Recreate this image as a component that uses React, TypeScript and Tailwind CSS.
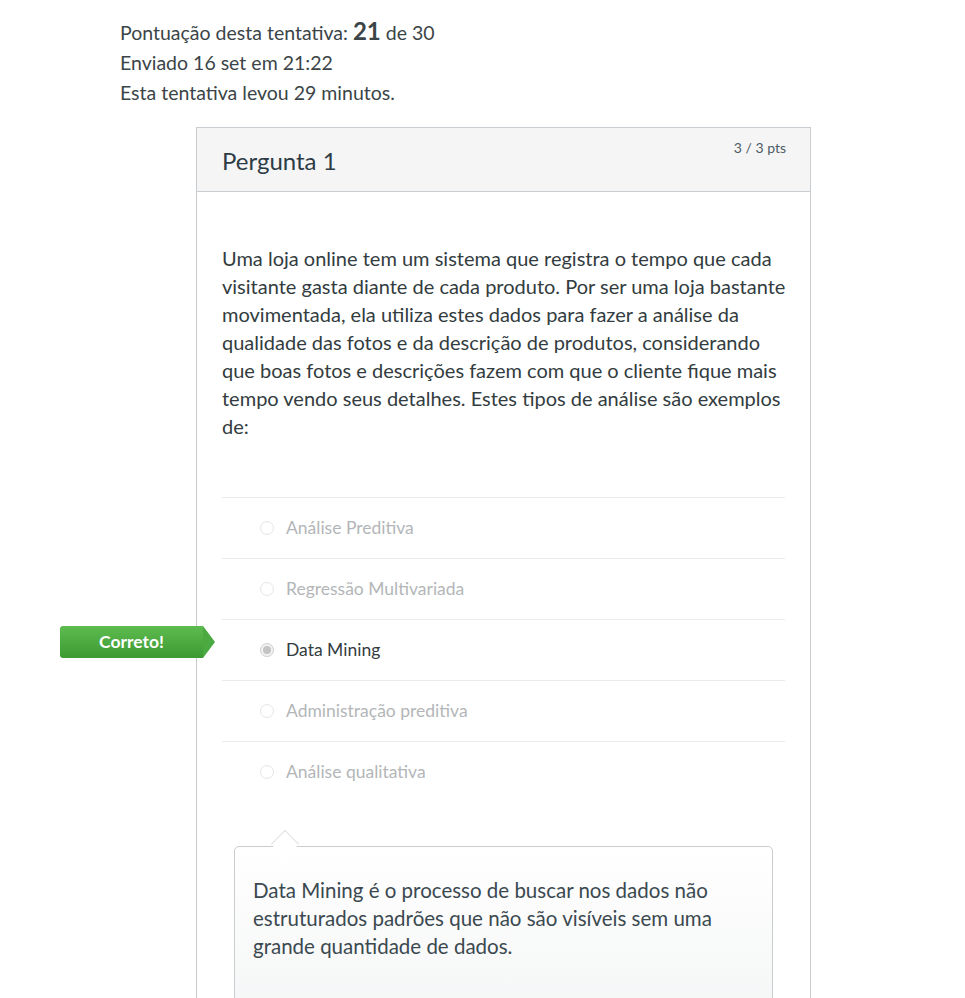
import React from 'react';

const answers = [
  { text: 'Análise Preditiva', selected: false },
  { text: 'Regressão Multivariada', selected: false },
  { text: 'Data Mining', selected: true },
  { text: 'Administração preditiva', selected: false },
  { text: 'Análise qualitativa', selected: false },
];

const Radio = ({ selected }: { selected: boolean }) => (
  <span
    className={
      'inline-flex items-center justify-center w-[14px] h-[14px] rounded-full border ' +
      (selected ? 'border-[#cfcfcf] bg-[#f2f2f2]' : 'border-[#e6e6e6] bg-white')
    }
  >
    {selected && <span className="w-[8px] h-[8px] rounded-full bg-[#c4c4c4]" />}
  </span>
);

const App = () => {
  return (
    <div
      className="min-h-screen bg-white text-[#2d3b45] overflow-hidden"
      style={{ fontFamily: 'Lato, "Open Sans", "Liberation Sans", sans-serif' }}
    >
      <div className="pl-[120px] pt-[16px] text-[19.5px] leading-[30px] text-[#3b4548]">
        <div>
          Pontuação desta tentativa: <span className="text-[24px] font-bold">21</span> de 30
        </div>
        <div>Enviado 16 set em 21:22</div>
        <div>Esta tentativa levou 29 minutos.</div>
      </div>

      <div className="ml-[196px] mt-[19px] w-[615px] border border-[#c7cdd1] border-b-0">
        <div className="h-[64px] bg-[#f5f5f5] border-b border-[#c7cdd1] flex justify-between pl-[25px] pr-[24px]">
          <h2 className="text-[24px] pt-[18px] leading-[30px] text-[#2d3b45]">Pergunta 1</h2>
          <span className="text-[14px] pt-[10px] leading-[20px] text-[#4d5b65]">3 / 3 pts</span>
        </div>

        <div className="pl-[25px] pr-[25px] pt-[52px]">
          <p className="text-[20px] leading-[28px] whitespace-nowrap text-[#333c40]">
            Uma loja online tem um sistema que registra o tempo que cada
            <br />
            visitante gasta diante de cada produto. Por ser uma loja bastante
            <br />
            movimentada, ela utiliza estes dados para fazer a análise da
            <br />
            qualidade das fotos e da descrição de produtos, considerando
            <br />
            que boas fotos e descrições fazem com que o cliente fique mais
            <br />
            tempo vendo seus detalhes. Estes tipos de análise são exemplos
            <br />
            de:
          </p>

          <div className="mt-[57px]">
            {answers.map((a) => (
              <div
                key={a.text}
                className="relative h-[61px] border-t border-[#ebebeb] flex items-center pl-[38px] gap-[12px]"
              >
                {a.selected && (
                  <div className="absolute left-[-162px] top-[6px] flex items-center">
                    <div className="w-[143px] h-[32px] rounded-l-[3px] bg-gradient-to-b from-[#5dbb4f] to-[#3c9a33] text-white text-[17.5px] font-bold flex items-center justify-center">
                      Correto!
                    </div>
                    <div className="w-0 h-0 border-y-[16px] border-y-transparent border-l-[12px] border-l-[#4aa940]" />
                  </div>
                )}
                <Radio selected={a.selected} />
                <span
                  className={
                    'text-[17.5px] ' + (a.selected ? 'text-[#333c40]' : 'text-[#b3b6b8]')
                  }
                >
                  {a.text}
                </span>
              </div>
            ))}
          </div>

          <div className="relative mx-[12px] mt-[44px] h-[200px] rounded-[5px] border border-[#c9cdd0] bg-gradient-to-b from-white to-[#f3f4f5] pl-[18px] pr-[20px] pt-[29px]">
            <div className="absolute left-[40px] top-[-13px] w-[20px] h-[20px] rotate-45 bg-white border-l border-t border-[#dfe2e4]" />
            <p className="relative text-[20.5px] leading-[28px] whitespace-nowrap text-[#3b4950]">
              Data Mining é o processo de buscar nos dados não
              <br />
              estruturados padrões que não são visíveis sem uma
              <br />
              grande quantidade de dados.
            </p>
          </div>
        </div>
      </div>
    </div>
  );
};

export default App;
